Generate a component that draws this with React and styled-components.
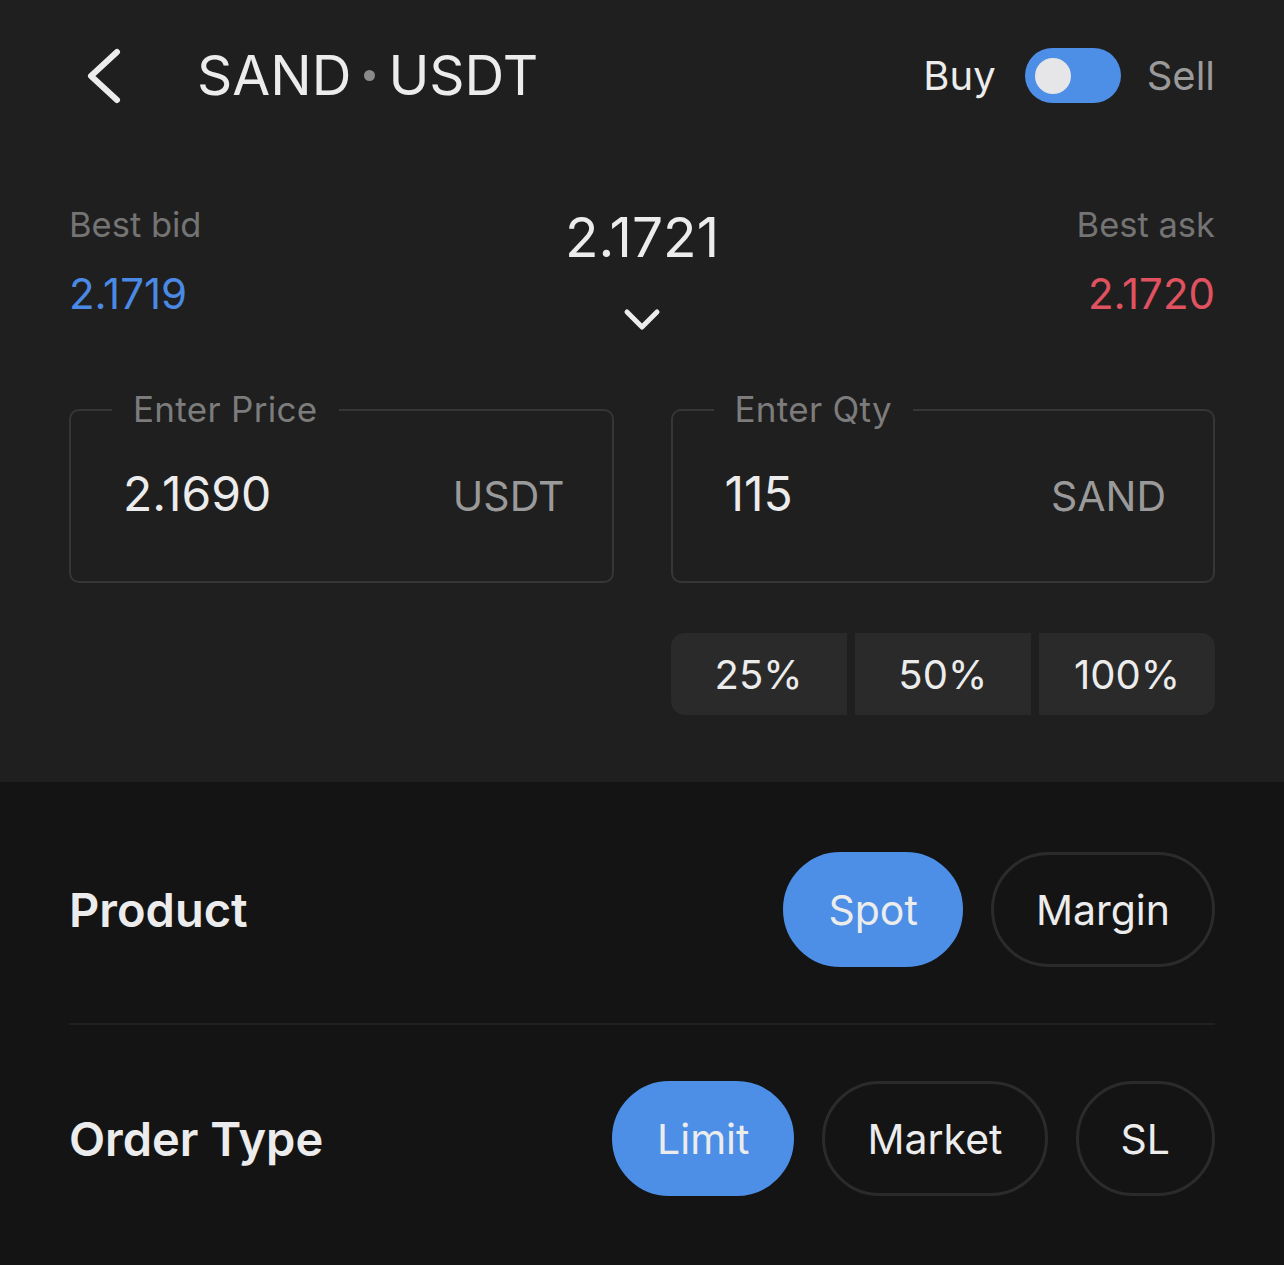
import React from 'react'
import styled, { createGlobalStyle } from 'styled-components'

const GlobalStyle = createGlobalStyle`
  body {
    margin: 0;
    background: #141414;
    font-family: Inter, "Noto Sans", sans-serif;
    color: #ececec;
  }
`

const Page = styled.div`
  width: 1284px;
  min-height: 1265px;
  background: #141414;
`

const Top = styled.section`
  background: #1f1f1f;
  padding: 48px 69px 67px;
`

const Header = styled.header`
  display: flex;
  align-items: center;
  height: 55px;
`

const BackButton = styled.button`
  width: 128px;
  height: 55px;
  padding: 0 0 0 16px;
  border: 0;
  background: none;
  display: flex;
  align-items: center;
  cursor: pointer;
`

const Title = styled.h1`
  margin: 0;
  flex: 1;
  display: flex;
  align-items: center;
  gap: 13px;
  font-size: 55px;
  line-height: 1;
  font-weight: 400;
  color: #ececec;
`

const Dot = styled.span`
  width: 11px;
  height: 11px;
  border-radius: 50%;
  background: #8a8a8a;
`

const Side = styled.span`
  font-size: 40px;
  line-height: 1;
  color: ${p => (p.$active ? '#ececec' : '#9a9a9a')};
`

const Toggle = styled.div`
  position: relative;
  width: 96px;
  height: 55px;
  margin: 0 26px 0 29px;
  border-radius: 28px;
  background: #4d8fe6;
`

const Knob = styled.span`
  position: absolute;
  left: 10px;
  top: 9.5px;
  width: 36px;
  height: 36px;
  border-radius: 50%;
  background: #e6e6e8;
`

const Quotes = styled.div`
  display: grid;
  grid-template-columns: 1fr auto 1fr;
  margin-top: 105px;
`

const QuoteCol = styled.div`
  display: flex;
  flex-direction: column;
  align-items: ${p => p.$align};
`

const QuoteLabel = styled.span`
  font-size: 34.5px;
  line-height: 1;
  color: #747474;
`

const QuoteValue = styled.span`
  margin-top: 30px;
  font-size: 42px;
  line-height: 1;
  color: ${p => p.$color};
`

const LastPrice = styled.div`
  display: flex;
  flex-direction: column;
  align-items: center;
  padding-top: 2px;
`

const LastValue = styled.span`
  font-size: 55px;
  line-height: 1;
  color: #ececec;
`

const Expand = styled.svg`
  margin-top: 43px;
`

const Inputs = styled.div`
  display: grid;
  grid-template-columns: 1fr 1fr;
  column-gap: 57px;
  margin-top: 60px;
`

const Field = styled.fieldset`
  margin: 0;
  padding: 0;
  min-width: 0;
  border: 2px solid #363636;
  border-radius: 10px;
`

const Legend = styled.legend`
  margin-left: 41px;
  padding: 0 21px;
  font-size: 35px;
  letter-spacing: 0.3px;
  line-height: 1;
  color: #7c7c7c;
`

const FieldBody = styled.div`
  display: flex;
  align-items: baseline;
  justify-content: space-between;
  padding: 43px 47px 63px 52px;
`

const FieldValue = styled.span`
  font-size: 48px;
  line-height: 1;
  color: #ececec;
`

const Unit = styled.span`
  font-size: 41px;
  line-height: 1;
  color: #9a9a9a;
`

const Percents = styled.div`
  grid-column: 2;
  display: grid;
  grid-template-columns: repeat(3, 1fr);
  gap: 8px;
  margin-top: 50px;
  border-radius: 14px;
  overflow: hidden;
`

const PercentButton = styled.button`
  height: 82px;
  border: 0;
  background: #2a2a2a;
  font-family: inherit;
  font-size: 40px;
  color: #ececec;
  cursor: pointer;
`

const Bottom = styled.section`
  padding: 70px 69px;
`

const OptionRow = styled.div`
  display: flex;
  align-items: center;
  justify-content: space-between;
`

const RowLabel = styled.h2`
  margin: 0;
  font-size: 47px;
  font-weight: 600;
  line-height: 1;
  color: #ececec;
`

const Chips = styled.div`
  display: flex;
  gap: 28px;
`

const Chip = styled.button`
  box-sizing: border-box;
  height: 115px;
  padding: 0 42px;
  border-radius: 58px;
  border: 3px solid ${p => (p.$active ? '#4d8fe6' : '#2b2b2b')};
  background: ${p => (p.$active ? '#4d8fe6' : 'transparent')};
  font-family: inherit;
  font-size: 41px;
  color: #ececec;
  cursor: pointer;
`

const Divider = styled.hr`
  margin: 56px 0;
  border: 0;
  border-top: 2px solid #202020;
`

export default function App() {
  return (
    <Page>
      <GlobalStyle />
      <Top>
        <Header>
          <BackButton aria-label="Back">
            <svg width="38" height="56" viewBox="0 0 38 56">
              <path d="M32 4 L6 28 L32 52" fill="none" stroke="#ececec" strokeWidth="6" strokeLinecap="round" strokeLinejoin="round" />
            </svg>
          </BackButton>
          <Title>
            SAND <Dot /> USDT
          </Title>
          <Side $active>Buy</Side>
          <Toggle>
            <Knob />
          </Toggle>
          <Side>Sell</Side>
        </Header>

        <Quotes>
          <QuoteCol $align="flex-start">
            <QuoteLabel>Best bid</QuoteLabel>
            <QuoteValue $color="#4a8ae4">2.1719</QuoteValue>
          </QuoteCol>
          <LastPrice>
            <LastValue>2.1721</LastValue>
            <Expand width="38" height="24" viewBox="0 0 38 24">
              <path d="M4 4 L19 19 L34 4" fill="none" stroke="#ececec" strokeWidth="5" strokeLinecap="round" strokeLinejoin="round" />
            </Expand>
          </LastPrice>
          <QuoteCol $align="flex-end">
            <QuoteLabel>Best ask</QuoteLabel>
            <QuoteValue $color="#e0525f">2.1720</QuoteValue>
          </QuoteCol>
        </Quotes>

        <Inputs>
          <Field>
            <Legend>Enter Price</Legend>
            <FieldBody>
              <FieldValue>2.1690</FieldValue>
              <Unit>USDT</Unit>
            </FieldBody>
          </Field>
          <Field>
            <Legend>Enter Qty</Legend>
            <FieldBody>
              <FieldValue>115</FieldValue>
              <Unit>SAND</Unit>
            </FieldBody>
          </Field>
          <Percents>
            <PercentButton>25%</PercentButton>
            <PercentButton>50%</PercentButton>
            <PercentButton>100%</PercentButton>
          </Percents>
        </Inputs>
      </Top>

      <Bottom>
        <OptionRow>
          <RowLabel>Product</RowLabel>
          <Chips>
            <Chip $active>Spot</Chip>
            <Chip>Margin</Chip>
          </Chips>
        </OptionRow>
        <Divider />
        <OptionRow>
          <RowLabel>Order Type</RowLabel>
          <Chips>
            <Chip $active>Limit</Chip>
            <Chip>Market</Chip>
            <Chip>SL</Chip>
          </Chips>
        </OptionRow>
      </Bottom>
    </Page>
  )
}
